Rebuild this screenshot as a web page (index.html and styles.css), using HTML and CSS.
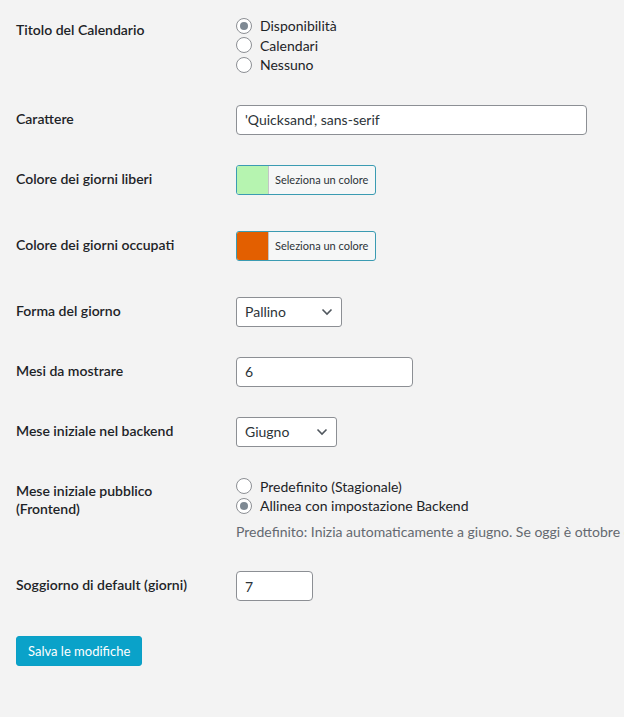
FILE: index.html
```html
<!DOCTYPE html>
<html lang="it">
<head>
    <meta charset="UTF-8">
    <meta name="viewport" content="width=device-width, initial-scale=1.0">
    <title>Impostazioni Calendario</title>
    <link rel="stylesheet" href="styles.css">
</head>
<body>

    <form class="settings">

        <!-- Titolo -->
        <div class="row">
            <div class="label">Titolo del Calendario</div>
            <div class="field">
                <label class="choice"><input type="radio" name="titolo" checked> Disponibilità</label>
                <label class="choice"><input type="radio" name="titolo"> Calendari</label>
                <label class="choice"><input type="radio" name="titolo"> Nessuno</label>
            </div>
        </div>

        <!-- Font -->
        <div class="row">
            <div class="label">Carattere</div>
            <div class="field">
                <input type="text" class="text-input font-input" value="'Quicksand', sans-serif">
            </div>
        </div>

        <!-- Colori -->
        <div class="row">
            <div class="label">Colore dei giorni liberi</div>
            <div class="field">
                <button type="button" class="color-btn">
                    <span class="swatch free"></span>
                    <span class="color-text">Seleziona un colore</span>
                </button>
            </div>
        </div>

        <div class="row">
            <div class="label">Colore dei giorni occupati</div>
            <div class="field">
                <button type="button" class="color-btn">
                    <span class="swatch busy"></span>
                    <span class="color-text">Seleziona un colore</span>
                </button>
            </div>
        </div>

        <!-- Forma -->
        <div class="row">
            <div class="label">Forma del giorno</div>
            <div class="field">
                <div class="select-wrap shape">
                    <select>
                        <option>Pallino</option>
                        <option>Quadrato</option>
                    </select>
                    <svg class="chevron" width="12" height="8" viewBox="0 0 12 8"><path d="M1.5 1.5 L6 6 L10.5 1.5" fill="none" stroke="#50575e" stroke-width="1.6"/></svg>
                </div>
            </div>
        </div>

        <div class="row">
            <div class="label">Mesi da mostrare</div>
            <div class="field">
                <input type="number" class="text-input months-input" value="6">
            </div>
        </div>

        <div class="row">
            <div class="label">Mese iniziale nel backend</div>
            <div class="field">
                <div class="select-wrap month">
                    <select>
                        <option>Giugno</option>
                        <option>Luglio</option>
                    </select>
                    <svg class="chevron" width="12" height="8" viewBox="0 0 12 8"><path d="M1.5 1.5 L6 6 L10.5 1.5" fill="none" stroke="#50575e" stroke-width="1.6"/></svg>
                </div>
            </div>
        </div>

        <!-- Frontend -->
        <div class="row">
            <div class="label">Mese iniziale pubblico (Frontend)</div>
            <div class="field">
                <label class="choice"><input type="radio" name="frontend"> Predefinito (Stagionale)</label>
                <label class="choice"><input type="radio" name="frontend" checked> Allinea con impostazione Backend</label>
                <p class="description">Predefinito: Inizia automaticamente a giugno. Se oggi è ottobre o successivo, mostra il giugno dell'anno successivo.</p>
            </div>
        </div>

        <div class="row">
            <div class="label">Soggiorno di default (giorni)</div>
            <div class="field">
                <input type="number" class="text-input stay-input" value="7">
            </div>
        </div>

        <div class="submit">
            <button type="submit" class="primary-btn">Salva le modifiche</button>
        </div>
    </form>

</body>
</html>
```

FILE: styles.css
```css
html {
    overflow-x: hidden;
}

body {
    margin: 0;
    background-color: #f3f3f3;
    color: #1d2327;
    font-family: Lato, "Liberation Sans", sans-serif;
    font-size: 14px;
}

.settings {
    padding: 1px 16px 0;
}

.row {
    display: grid;
    grid-template-columns: 210px 1fr;
}

.label {
    padding: 20px 10px 20px 0;
    font-weight: 600;
    line-height: 1.3;
}

.field {
    padding: 15px 10px;
    min-width: 0;
}

/* Radio */
.choice {
    display: flex;
    align-items: center;
    gap: 8px;
    height: 19.5px;
    white-space: nowrap;
}

.choice input {
    appearance: none;
    -webkit-appearance: none;
    width: 16px;
    height: 16px;
    margin: 0;
    border: 1px solid #8c8f94;
    border-radius: 50%;
    background-color: #fff;
    display: flex;
    align-items: center;
    justify-content: center;
}

.choice input:checked::before {
    content: "";
    width: 8px;
    height: 8px;
    border-radius: 50%;
    background-color: #7e8993;
}

/* Inputs */
.text-input {
    box-sizing: border-box;
    height: 30px;
    padding: 0 8px;
    border: 1px solid #8c8f94;
    border-radius: 4px;
    background-color: #fff;
    color: #2c3338;
    font-family: inherit;
    font-size: 14px;
    display: block;
}

.text-input::-webkit-inner-spin-button,
.text-input::-webkit-outer-spin-button {
    -webkit-appearance: none;
    margin: 0;
}

.font-input {
    width: 351px;
}

.months-input {
    width: 177px;
}

.stay-input {
    width: 77px;
}

/* Color picker */
.color-btn {
    display: flex;
    box-sizing: border-box;
    width: 140px;
    height: 30px;
    margin: 0 0 6px;
    padding: 0;
    border: 1px solid #3a9bb2;
    border-radius: 3px;
    background-color: #f6f7f7;
    overflow: hidden;
    font-family: inherit;
    cursor: pointer;
}

.swatch {
    width: 31px;
    height: 100%;
    border-right: 1px solid #c3c4c7;
}

.swatch.free {
    background-color: #b6f4b0;
}

.swatch.busy {
    background-color: #e35f00;
}

.color-text {
    align-self: center;
    padding-left: 6px;
    font-size: 11px;
    color: #2c3338;
}

/* Select */
.select-wrap {
    position: relative;
    display: inline-block;
}

.select-wrap select {
    appearance: none;
    -webkit-appearance: none;
    box-sizing: border-box;
    height: 30px;
    padding: 0 24px 0 8px;
    border: 1px solid #8c8f94;
    border-radius: 3px;
    background-color: #fff;
    color: #2c3338;
    font-family: inherit;
    font-size: 14px;
    display: block;
}

.select-wrap.shape select {
    width: 106px;
}

.select-wrap.month select {
    width: 101px;
}

.chevron {
    position: absolute;
    right: 9px;
    top: 11px;
    pointer-events: none;
}

.description {
    margin: 6px 0 0;
    color: #646970;
    line-height: 1.4;
    white-space: nowrap;
}

/* Submit */
.submit {
    padding: 20px 0;
}

.primary-btn {
    height: 30px;
    padding: 0 11px;
    border: 1px solid #0a9fc6;
    border-radius: 3px;
    background-color: #0aa2c9;
    color: #fff;
    font-family: inherit;
    font-size: 13px;
    cursor: pointer;
}
```
